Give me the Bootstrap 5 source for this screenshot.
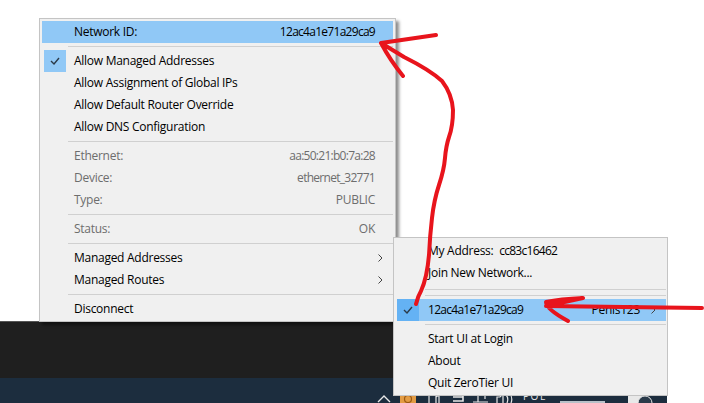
<!DOCTYPE html>
<html lang="en">
<head>
<meta charset="utf-8">
<title>ZeroTier tray menu</title>
<link href="https://cdn.jsdelivr.net/npm/bootstrap@5.3.0/dist/css/bootstrap.min.css" rel="stylesheet">
<style>
html,body{margin:0;height:100%;background:#fff;overflow:hidden}
.desk{width:704px;height:403px;overflow:hidden;font-family:"Open Sans","Noto Sans",sans-serif;font-size:12px;color:#000;letter-spacing:-.27px}
.spacer-top{height:321px}
.darkband{height:57px;width:393px;background:#1f1f1f;border-top:1px solid #555}
.taskbar{height:25px;width:667px;background:#1c2d3e;color:#e8e8e8}
.traymenu{position:absolute;background:#f0f0f0;border:1px solid #c4c4c4;padding:2px;box-shadow:3px 3px 3px rgba(0,0,0,.45)}
.menu-a{left:39px;top:18px;width:357px;height:304px}
.menu-b{left:393px;top:237px;width:275px;height:159px;box-shadow:none;padding:2px 1px 2px 3px}
.mrow{height:22px;line-height:22px;padding-right:18px;white-space:nowrap}
.menu-a .mrow{padding-left:32px}
.menu-b .mrow{padding-left:31px}
.mrow.hot{background:#90c8f6}
.mrow.off{color:#6d6d6d}
.valtext{letter-spacing:-.72px}
.mrow .tick{position:absolute;width:22px;height:22px;left:2px;display:flex;align-items:center;justify-content:center}
.menu-a .tick{background:#90c8f6}
.menu-b .tick{background:#64b2f4;left:0}
.msep{height:1px;background:#d0d0d0;margin:3px 0 3px 26px}
.menu-b .msep{margin-left:28px}
.menu-b .msep-wide{margin-top:5px;margin-bottom:0}
.menu-b .msep-tail{margin-top:5px}
.sub-arrow{margin-right:-8px;margin-left:11px}
.ink{position:absolute;left:0;top:0;pointer-events:none}
.lang{left:523px;top:13px;font-size:10px;line-height:11px;letter-spacing:1.6px}
</style>
</head>
<body>
<div class="desk position-relative">
  <div class="spacer-top"></div>
  <div class="darkband"></div>
  <div class="taskbar position-relative">
    <svg class="ink" width="667" height="25" viewBox="0 0 667 25" fill="none" stroke="#e8e8e8" stroke-width="1.2">
      <path d="M378 24l6-6 6 6" stroke-width="1.4"/>
      <rect x="400" y="14" width="16" height="11" fill="#e39c44" stroke="none"/>
      <circle cx="408" cy="21" r="3.5" stroke="#9b5a14"/>
      <path d="M429 25v-9h7v9M436 19l3-2v8"/>
      <path d="M450 16h13v7h-10M453 19h10" stroke-width="1.6"/>
      <path d="M480 16h5v5M473 24h15M478 16v8"/>
      <path d="M497 25v-6h3l3-3v9M506 17q3 3 1 8M510 16q3 4 1 9"/>
    </svg>
    <span class="lang position-absolute">POL</span>
    <svg class="ink" width="667" height="25" viewBox="0 0 667 25">
      <rect x="560" y="23" width="45" height="2" fill="#b8c0c8"/>
      <rect x="628" y="18" width="15" height="7" fill="#e8e8e8"/>
      <circle cx="645" cy="25" r="7" fill="#2a3a4a" stroke="#e8e8e8"/>
    </svg>
  </div>

  <div class="traymenu menu-a">
    <div class="mrow hot d-flex justify-content-between"><span>Network ID:</span><span class="valtext">12ac4a1e71a29ca9</span></div>
    <div class="msep"></div>
    <div class="mrow position-relative">
      <span class="tick"><svg width="10" height="8" viewBox="0 0 10 8" fill="none" stroke="#2b3a48" stroke-width="1.4"><path d="M1 4l3 3 5-6"/></svg></span>Allow Managed Addresses</div>
    <div class="mrow">Allow Assignment of Global IPs</div>
    <div class="mrow">Allow Default Router Override</div>
    <div class="mrow">Allow DNS Configuration</div>
    <div class="msep"></div>
    <div class="mrow off d-flex justify-content-between"><span>Ethernet:</span><span class="valtext">aa:50:21:b0:7a:28</span></div>
    <div class="mrow off d-flex justify-content-between"><span>Device:</span><span class="valtext">ethernet_32771</span></div>
    <div class="mrow off d-flex justify-content-between"><span>Type:</span><span>PUBLIC</span></div>
    <div class="msep"></div>
    <div class="mrow off d-flex justify-content-between"><span>Status:</span><span>OK</span></div>
    <div class="msep"></div>
    <div class="mrow d-flex justify-content-between"><span>Managed Addresses</span><svg class="sub-arrow align-self-center" width="5" height="8" viewBox="0 0 5 8" fill="none" stroke="#444"><path d="M.5.5L4 4 .5 7.5"/></svg></div>
    <div class="mrow d-flex justify-content-between"><span>Managed Routes</span><svg class="sub-arrow align-self-center" width="5" height="8" viewBox="0 0 5 8" fill="none" stroke="#444"><path d="M.5.5L4 4 .5 7.5"/></svg></div>
    <div class="msep"></div>
    <div class="mrow">Disconnect</div>
  </div>

  <div class="traymenu menu-b">
    <div class="mrow">My Address:&nbsp; <span class="valtext">cc83c16462</span></div>
    <div class="mrow">Join New Network...</div>
    <div class="msep msep-wide"></div>
    <div class="msep msep-tail"></div>
    <div class="mrow hot position-relative d-flex justify-content-between">
      <span class="tick"><svg width="10" height="8" viewBox="0 0 10 8" fill="none" stroke="#2b3a48" stroke-width="1.4"><path d="M1 4l3 3 5-6"/></svg></span>
      <span class="valtext">12ac4a1e71a29ca9</span><span class="d-flex align-items-center">Penis123<svg class="sub-arrow" width="5" height="8" viewBox="0 0 5 8" fill="none" stroke="#444"><path d="M.5.5L4 4 .5 7.5"/></svg></span></div>
    <div class="msep"></div>
    <div class="mrow">Start UI at Login</div>
    <div class="mrow">About</div>
    <div class="mrow">Quit ZeroTier UI</div>
  </div>

  <svg class="ink" width="704" height="403" viewBox="0 0 704 403" fill="none" stroke="#e8141c" stroke-width="4" stroke-linecap="round" stroke-linejoin="round">
    <path d="M416 304Q418 296 421 291Q427 278 429 255Q430 235 432 218Q434 200 439 185Q444 170 445 158Q446 146 449 137Q453 126 453 110Q452 94 442 81Q430 70 404 57L381 43L436 35M381 43Q390 60 403 76"/>
    <path d="M702 308L546 306L583 298Q560 299 546 302Q546 309 568 321"/>
  </svg>
</div>
<script src="https://cdn.jsdelivr.net/npm/bootstrap@5.3.0/dist/js/bootstrap.bundle.min.js"></script>
</body>
</html>
